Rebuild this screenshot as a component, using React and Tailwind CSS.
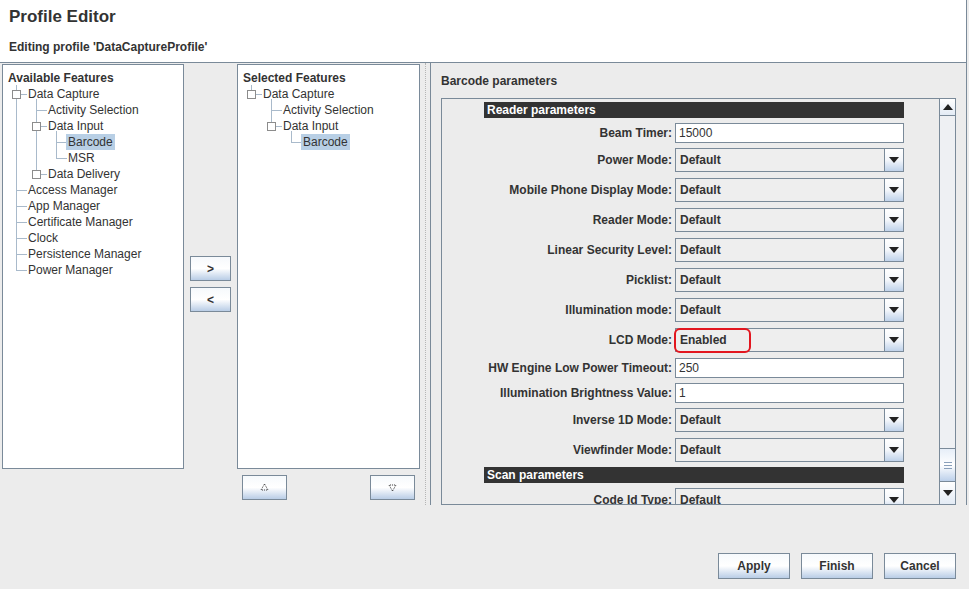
import React from "react";

const LINE = "#a9bacb";
const BOX = "#8c8c8c";

// rows: [label, depth, hasBox, selected]
const availableRows = [
  ["Data Capture", 0, true],
  ["Activity Selection", 1, false],
  ["Data Input", 1, true],
  ["Barcode", 2, false, true],
  ["MSR", 2, false],
  ["Data Delivery", 1, true],
  ["Access Manager", 0, false],
  ["App Manager", 0, false],
  ["Certificate Manager", 0, false],
  ["Clock", 0, false],
  ["Persistence Manager", 0, false],
  ["Power Manager", 0, false],
];

const selectedRows = [
  ["Data Capture", 0, true],
  ["Activity Selection", 1, false],
  ["Data Input", 1, true],
  ["Barcode", 2, false, true],
];

// vertical guide lines: [depth, fromRow, toRow]
const availableGuides = [
  [0, 0, 11],
  [1, 0, 5],
  [2, 2, 4],
];
const selectedGuides = [
  [1, 0, 2],
  [2, 2, 3],
];

const cx = (d) => 13 + 20 * d;
const cy = (i) => 29 + 16 * i;

const TreeLines = ({ rows, guides }) => (
  <svg className="absolute left-0 top-0" width="180" height="260">
    <line x1={cx(0) + 0.5} y1="20" x2={cx(0) + 0.5} y2="25" stroke={LINE} />
    {guides.map(([d, from, to], k) => (
      <line
        key={k}
        x1={cx(d) + 0.5}
        y1={cy(from) + (d === 0 ? -4 : 5)}
        x2={cx(d) + 0.5}
        y2={cy(to) + 0.5}
        stroke={LINE}
      />
    ))}
    {rows.map(([, d, box], i) => {
      const x = cx(d);
      const y = cy(i);
      return (
        <g key={i}>
          <line x1={box ? x + 5 : x} y1={y + 0.5} x2={x + 11} y2={y + 0.5} stroke={LINE} />
          {box && (
            <rect x={x - 4 + 0.5} y={y - 4 + 0.5} width="8" height="8" fill="white" stroke={BOX} />
          )}
        </g>
      );
    })}
  </svg>
);

const padByDepth = ["pl-[23px]", "pl-[43px]", "pl-[63px]"];

const Tree = ({ title, rows, guides }) => (
  <div className="relative h-full border border-[#7a8a99] bg-white pt-[5px] text-[12px] text-[#333]">
    <TreeLines rows={rows} guides={guides} />
    <div className="relative flex h-[16px] items-center pl-[5px] font-bold">{title}</div>
    {rows.map(([label, d, , sel], i) => (
      <div key={i} className={`relative flex h-[16px] items-center ${padByDepth[d]}`}>
        <span className={`px-[2px] leading-[16px] ${sel ? "bg-[#b8cfe5]" : ""}`}>{label}</span>
      </div>
    ))}
  </div>
);

const OceanButton = ({ className = "", children }) => (
  <button
    className={`flex items-center justify-center border border-[#7a8a99] bg-linear-to-b from-[#f6f9fc] via-white to-[#b9cde6] text-[12px] font-bold text-[#333] ${className}`}
  >
    {children}
  </button>
);

const DottedArrow = ({ up }) => (
  <svg width="9" height="9" viewBox="0 0 9 9">
    <path
      d={up ? "M4.5 1 L8 7 L1 7 Z" : "M4.5 8 L8 2 L1 2 Z"}
      fill="none"
      stroke="#333"
      strokeDasharray="1 1"
    />
  </svg>
);

const Caret = ({ up }) => (
  <svg width="10" height="6" viewBox="0 0 10 6">
    <path d={up ? "M0 6 L5 0 L10 6 Z" : "M0 0 L10 0 L5 6 Z"} fill="#222" />
  </svg>
);

const Combo = ({ value, marked }) => (
  <div className="relative flex h-[24px] w-[229px] border border-[#7a8a99] bg-[#eeeeee]">
    <div className="flex flex-1 items-center pl-[4px] font-bold text-[#333]">{value}</div>
    <div className="flex w-[19px] items-center justify-center border-l border-[#7a8a99] bg-linear-to-b from-white via-[#f4f7fb] to-[#bfd2ea]">
      <Caret />
    </div>
    {marked && (
      <div className="absolute left-[-2px] top-[-1px] h-[25px] w-[77px] rounded-[6px] border-2 border-[#e2161f]" />
    )}
  </div>
);

const TextField = ({ value }) => (
  <div className="flex h-[20px] w-[229px] items-center border border-[#7a8a99] bg-white pl-[3px] text-[#333]">
    {value}
  </div>
);

const Row = ({ label, children, mt }) => (
  <div className={`flex items-center ${mt}`}>
    <div className="w-[233px] pr-[3px] text-right font-bold text-[#333]">{label}</div>
    {children}
  </div>
);

const SectionBar = ({ children, mt }) => (
  <div className={`ml-[42px] flex h-[16px] w-[420px] items-center bg-[#333333] pl-[3px] font-bold text-white ${mt}`}>
    {children}
  </div>
);

export default function App() {
  return (
    <div className="flex h-[589px] w-[969px] flex-col overflow-hidden bg-[#ececec] font-['Liberation_Sans',Arial,sans-serif] text-[12px]">
      {/* header */}
      <div className="h-[63px] w-[967px] shrink-0 border-b border-r border-[#7a8a99] bg-white pl-[9px] pt-[6px]">
        <div className="text-[17px] font-bold leading-[22px] text-[#333]">Profile Editor</div>
        <div className="mt-[10px] text-[12px] font-bold text-[#333]">Editing profile 'DataCaptureProfile'</div>
      </div>

      {/* main area */}
      <div className="flex h-[442px] w-[967px] shrink-0 border-r border-[#7a8a99]">
        {/* available */}
        <div className="flex w-[184px] flex-col pl-[2px] pt-[1px]">
          <div className="h-[405px]">
            <Tree title="Available Features" rows={availableRows} guides={availableGuides} />
          </div>
        </div>

        {/* move buttons */}
        <div className="flex w-[53px] flex-col items-center gap-[6px] pt-[193px]">
          <OceanButton className="h-[25px] w-[41px]">&gt;</OceanButton>
          <OceanButton className="h-[25px] w-[41px]">&lt;</OceanButton>
        </div>

        {/* selected */}
        <div className="flex w-[183px] flex-col pt-[1px]">
          <div className="h-[405px]">
            <Tree title="Selected Features" rows={selectedRows} guides={selectedGuides} />
          </div>
          <div className="flex justify-between px-[5px] pt-[6px]">
            <OceanButton className="h-[25px] w-[45px]">
              <DottedArrow up />
            </OceanButton>
            <OceanButton className="h-[25px] w-[45px]">
              <DottedArrow />
            </OceanButton>
          </div>
        </div>

        {/* splitter */}
        <div className="flex w-[10px] justify-center">
          <div className="h-full w-px border-l border-dotted border-[#b5b5b5]" />
        </div>

        {/* parameters panel */}
        <div className="flex flex-1 flex-col border-l border-[#7a8a99] pl-[10px] pr-[10px]">
          <div className="flex h-[35px] items-center pt-[1px] font-bold text-[#333]">Barcode parameters</div>
          <div className="flex h-[407px] overflow-hidden border border-[#7a8a99]">
            <div className="flex flex-1 flex-col overflow-hidden pt-[3px]">
              <SectionBar>Reader parameters</SectionBar>
              <Row label="Beam Timer:" mt="mt-[5px]">
                <TextField value="15000" />
              </Row>
              <Row label="Power Mode:" mt="mt-[5px]">
                <Combo value="Default" />
              </Row>
              <Row label="Mobile Phone Display Mode:" mt="mt-[6px]">
                <Combo value="Default" />
              </Row>
              <Row label="Reader Mode:" mt="mt-[6px]">
                <Combo value="Default" />
              </Row>
              <Row label="Linear Security Level:" mt="mt-[6px]">
                <Combo value="Default" />
              </Row>
              <Row label="Picklist:" mt="mt-[6px]">
                <Combo value="Default" />
              </Row>
              <Row label="Illumination mode:" mt="mt-[6px]">
                <Combo value="Default" />
              </Row>
              <Row label="LCD Mode:" mt="mt-[6px]">
                <Combo value="Enabled" marked />
              </Row>
              <Row label="HW Engine Low Power Timeout:" mt="mt-[6px]">
                <TextField value="250" />
              </Row>
              <Row label="Illumination Brightness Value:" mt="mt-[5px]">
                <TextField value="1" />
              </Row>
              <Row label="Inverse 1D Mode:" mt="mt-[5px]">
                <Combo value="Default" />
              </Row>
              <Row label="Viewfinder Mode:" mt="mt-[6px]">
                <Combo value="Default" />
              </Row>
              <SectionBar mt="mt-[5px]">Scan parameters</SectionBar>
              <Row label="Code Id Type:" mt="mt-[5px]">
                <Combo value="Default" />
              </Row>
            </div>

            {/* scrollbar */}
            <div className="flex w-[16px] shrink-0 flex-col border-l border-[#7a8a99] bg-[#eef0f3]">
              <div className="flex h-[17px] items-center justify-center border-b border-[#7a8a99] bg-linear-to-b from-white to-[#e3ebf5]">
                <Caret up />
              </div>
              <div className="flex-1" />
              <div className="flex h-[34px] flex-col items-center justify-center gap-[2px] border-y border-[#7a8a99] bg-linear-to-b from-[#e6eef8] via-white to-[#bcd0ea]">
                <div className="h-px w-[8px] bg-[#8aa0ba]" />
                <div className="h-px w-[8px] bg-[#8aa0ba]" />
                <div className="h-px w-[8px] bg-[#8aa0ba]" />
              </div>
              <div className="flex h-[22px] items-center justify-center bg-linear-to-b from-white to-[#e3ebf5]">
                <Caret />
              </div>
            </div>
          </div>
        </div>
      </div>

      {/* bottom buttons */}
      <div className="flex flex-1 items-start justify-end gap-[11px] pr-[13px] pt-[48px]">
        <OceanButton className="h-[26px] w-[72px]">Apply</OceanButton>
        <OceanButton className="h-[26px] w-[72px]">Finish</OceanButton>
        <OceanButton className="h-[26px] w-[72px]">Cancel</OceanButton>
      </div>
    </div>
  );
}
